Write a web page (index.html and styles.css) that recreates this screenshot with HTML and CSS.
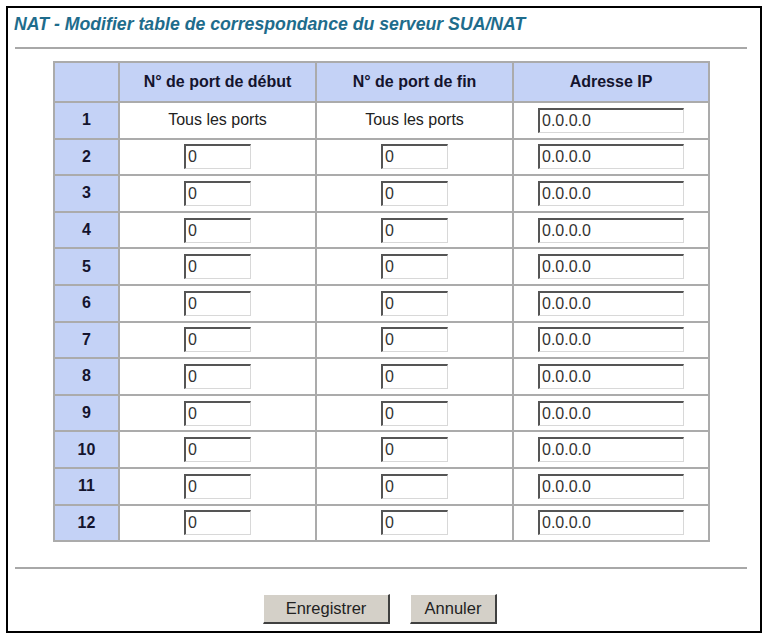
FILE: index.html
```html
<!DOCTYPE html>
<html lang="fr">
<head>
    <meta charset="UTF-8">
    <meta name="viewport" content="width=device-width, initial-scale=1.0">
    <title>NAT - Modifier table de correspondance</title>
    <link rel="stylesheet" href="styles.css">
</head>
<body>
    <div class="frame">
        <h1 class="title">NAT - Modifier table de correspondance du serveur SUA/NAT</h1>
        <hr class="rule">

        <table class="nat-table">
            <colgroup>
                <col class="col-num">
                <col class="col-port">
                <col class="col-port">
                <col class="col-ip">
            </colgroup>
            <tr>
                <th></th>
                <th>N° de port de début</th>
                <th>N° de port de fin</th>
                <th>Adresse IP</th>
            </tr>
            <tr>
                <td class="num">1</td>
                <td>Tous les ports</td>
                <td>Tous les ports</td>
                <td><input type="text" class="ip-input" value="0.0.0.0"></td>
            </tr>
            <tr>
                <td class="num">2</td>
                <td><input type="text" class="port-input" value="0"></td>
                <td><input type="text" class="port-input" value="0"></td>
                <td><input type="text" class="ip-input" value="0.0.0.0"></td>
            </tr>
            <tr>
                <td class="num">3</td>
                <td><input type="text" class="port-input" value="0"></td>
                <td><input type="text" class="port-input" value="0"></td>
                <td><input type="text" class="ip-input" value="0.0.0.0"></td>
            </tr>
            <tr>
                <td class="num">4</td>
                <td><input type="text" class="port-input" value="0"></td>
                <td><input type="text" class="port-input" value="0"></td>
                <td><input type="text" class="ip-input" value="0.0.0.0"></td>
            </tr>
            <tr>
                <td class="num">5</td>
                <td><input type="text" class="port-input" value="0"></td>
                <td><input type="text" class="port-input" value="0"></td>
                <td><input type="text" class="ip-input" value="0.0.0.0"></td>
            </tr>
            <tr>
                <td class="num">6</td>
                <td><input type="text" class="port-input" value="0"></td>
                <td><input type="text" class="port-input" value="0"></td>
                <td><input type="text" class="ip-input" value="0.0.0.0"></td>
            </tr>
            <tr>
                <td class="num">7</td>
                <td><input type="text" class="port-input" value="0"></td>
                <td><input type="text" class="port-input" value="0"></td>
                <td><input type="text" class="ip-input" value="0.0.0.0"></td>
            </tr>
            <tr>
                <td class="num">8</td>
                <td><input type="text" class="port-input" value="0"></td>
                <td><input type="text" class="port-input" value="0"></td>
                <td><input type="text" class="ip-input" value="0.0.0.0"></td>
            </tr>
            <tr>
                <td class="num">9</td>
                <td><input type="text" class="port-input" value="0"></td>
                <td><input type="text" class="port-input" value="0"></td>
                <td><input type="text" class="ip-input" value="0.0.0.0"></td>
            </tr>
            <tr>
                <td class="num">10</td>
                <td><input type="text" class="port-input" value="0"></td>
                <td><input type="text" class="port-input" value="0"></td>
                <td><input type="text" class="ip-input" value="0.0.0.0"></td>
            </tr>
            <tr>
                <td class="num">11</td>
                <td><input type="text" class="port-input" value="0"></td>
                <td><input type="text" class="port-input" value="0"></td>
                <td><input type="text" class="ip-input" value="0.0.0.0"></td>
            </tr>
            <tr>
                <td class="num">12</td>
                <td><input type="text" class="port-input" value="0"></td>
                <td><input type="text" class="port-input" value="0"></td>
                <td><input type="text" class="ip-input" value="0.0.0.0"></td>
            </tr>
        </table>

        <hr class="rule rule-bottom">

        <div class="buttons">
            <button class="btn btn-save">Enregistrer</button>
            <button class="btn btn-cancel">Annuler</button>
        </div>
    </div>
</body>
</html>
```

FILE: styles.css
```css
body {
    margin: 0;
    padding: 6px;
    font-family: "Liberation Sans", Arial, sans-serif;
    background: #fff;
}

.frame {
    box-sizing: border-box;
    width: 756px;
    height: 627px;
    border: 2px solid #000;
}

.title {
    margin: 0;
    padding: 6px 0 0 6px;
    font-size: 17.7px;
    line-height: 20px;
    font-weight: bold;
    font-style: italic;
    color: #1e6c8c;
}

.rule {
    border: 0;
    height: 2px;
    background: #a8a8a8;
    margin: 13px 13px 0 7px;
}

.nat-table {
    margin: 12px 0 0 45px;
    width: 655px;
    border-collapse: collapse;
    table-layout: fixed;
}

.col-num { width: 65px; }
.col-port { width: 197px; }
.col-ip { width: 196px; }

.nat-table th,
.nat-table td {
    border: 2px solid #ababab;
    padding: 0;
    text-align: center;
    font-size: 16px;
}

.nat-table th {
    height: 38px;
    background: #c4d2f6;
    color: #14142e;
    font-weight: bold;
}

.nat-table td {
    height: 34.6px;
    color: #222;
}

.nat-table td.num {
    background: #c4d2f6;
    color: #14142e;
    font-weight: bold;
}

.port-input,
.ip-input {
    box-sizing: border-box;
    height: 25px;
    margin: 0;
    padding: 0 0 0 2px;
    font-family: "Liberation Sans", Arial, sans-serif;
    font-size: 16px;
    color: #333;
    background: #fff;
    border-top: 2px solid #555;
    border-left: 2px solid #555;
    border-bottom: 1px solid #d8d8d8;
    border-right: 1px solid #d8d8d8;
    vertical-align: middle;
}

.port-input { width: 67px; }
.ip-input { width: 146px; }

.rule-bottom {
    margin-top: 25px;
}

.buttons {
    display: flex;
    justify-content: center;
    gap: 20px;
    margin-top: 25px;
    padding-right: 8px;
}

.btn {
    box-sizing: border-box;
    height: 30px;
    margin: 0;
    font-family: "Liberation Sans", Arial, sans-serif;
    font-size: 16.5px;
    color: #222;
    background: #d4d0c8;
    border-top: 1px solid #fff;
    border-left: 1px solid #fff;
    border-bottom: 2px solid #404040;
    border-right: 2px solid #404040;
}

.btn-save { width: 127px; }
.btn-cancel { width: 87px; }
```
